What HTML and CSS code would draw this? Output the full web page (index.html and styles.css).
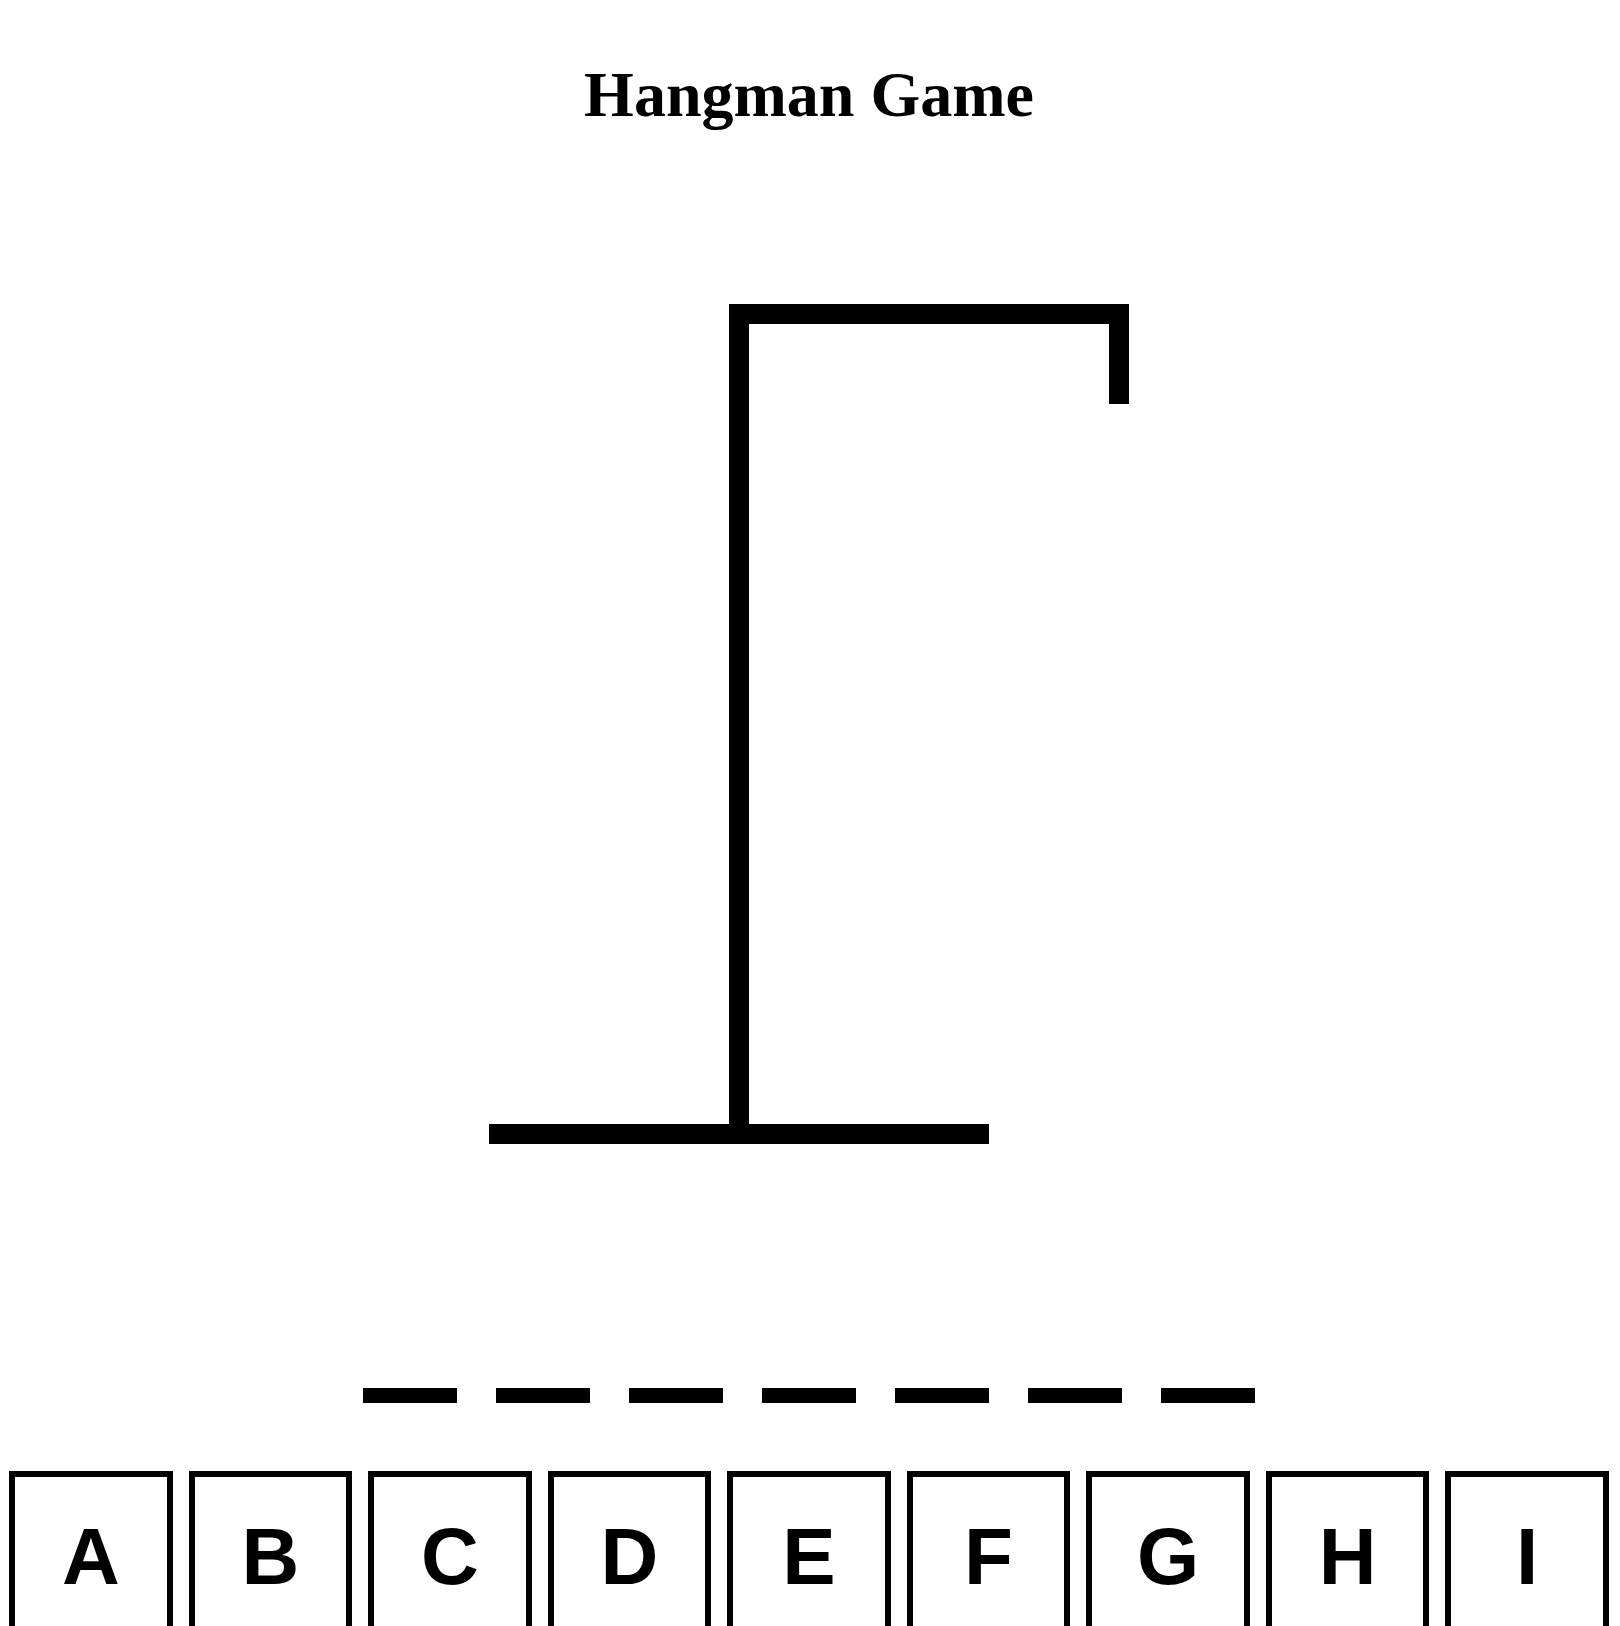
FILE: index.html
```html
<!DOCTYPE html>
<html lang="en">
<head>
  <meta charset="UTF-8">
  <meta name="viewport" content="width=device-width, initial-scale=1.0">
  <title>Hangman Game</title>
  <link rel="stylesheet" href="styles.css">
</head>
<body>
  <div class="game">
    <h1 class="title">Hangman Game</h1>

    <div class="gallows">
      <div class="beam"><div class="rope"></div></div>
      <div class="post"></div>
      <div class="base"></div>
    </div>

    <div class="word">
      <span class="letter"><span class="hidden">H</span></span>
      <span class="letter"><span class="hidden">A</span></span>
      <span class="letter"><span class="hidden">N</span></span>
      <span class="letter"><span class="hidden">G</span></span>
      <span class="letter"><span class="hidden">M</span></span>
      <span class="letter"><span class="hidden">A</span></span>
      <span class="letter"><span class="hidden">N</span></span>
    </div>

    <div class="keyboard">
      <button class="key">a</button>
      <button class="key">b</button>
      <button class="key">c</button>
      <button class="key">d</button>
      <button class="key">e</button>
      <button class="key">f</button>
      <button class="key">g</button>
      <button class="key">h</button>
      <button class="key">i</button>
      <button class="key">j</button>
      <button class="key">k</button>
      <button class="key">l</button>
      <button class="key">m</button>
      <button class="key">n</button>
      <button class="key">o</button>
      <button class="key">p</button>
      <button class="key">q</button>
      <button class="key">r</button>
      <button class="key">s</button>
      <button class="key">t</button>
      <button class="key">u</button>
      <button class="key">v</button>
      <button class="key">w</button>
      <button class="key">x</button>
      <button class="key">y</button>
      <button class="key">z</button>
    </div>
  </div>
</body>
</html>
```

FILE: styles.css
```css
body { margin: 8px 9px 8px 7px; background: white; color: black; }
.game { max-width: 1600px; margin: 0 auto; display: flex; flex-direction: column; align-items: center; }
.title { font-family: "Liberation Serif", "Times New Roman", serif; font-size: 64px; font-weight: bold; line-height: 80px; margin: 47px 0 169px; text-align: center; }

/* gallows */
.gallows { display: flex; flex-direction: column; }
.beam { height: 20px; width: 400px; margin-left: 240px; background: black; display: flex; justify-content: flex-end; }
.rope { width: 20px; height: 100px; flex-shrink: 0; background: black; }
.post { height: 800px; width: 20px; margin-left: 240px; background: black; }
.base { height: 20px; width: 500px; background: black; }

/* word */
.word { display: flex; gap: 39px; margin-top: 114px; }
.letter { display: block; width: 94px; height: 130px; border-bottom: 15px solid black; overflow: hidden; font-family: "Liberation Mono", monospace; font-size: 120px; font-weight: bold; line-height: 130px; text-align: center; }
.hidden { visibility: hidden; }

/* keyboard */
.keyboard { align-self: stretch; display: grid; grid-template-columns: repeat(auto-fit, minmax(150px, 1fr)); gap: 16px; margin-top: 68px; }
.key { aspect-ratio: 1 / 1; width: 100%; border: 6px solid black; background: white; color: black; font-family: "Liberation Sans", Arial, sans-serif; font-size: 80px; font-weight: bold; text-transform: uppercase; padding: 20px 16px 12px; }
```
